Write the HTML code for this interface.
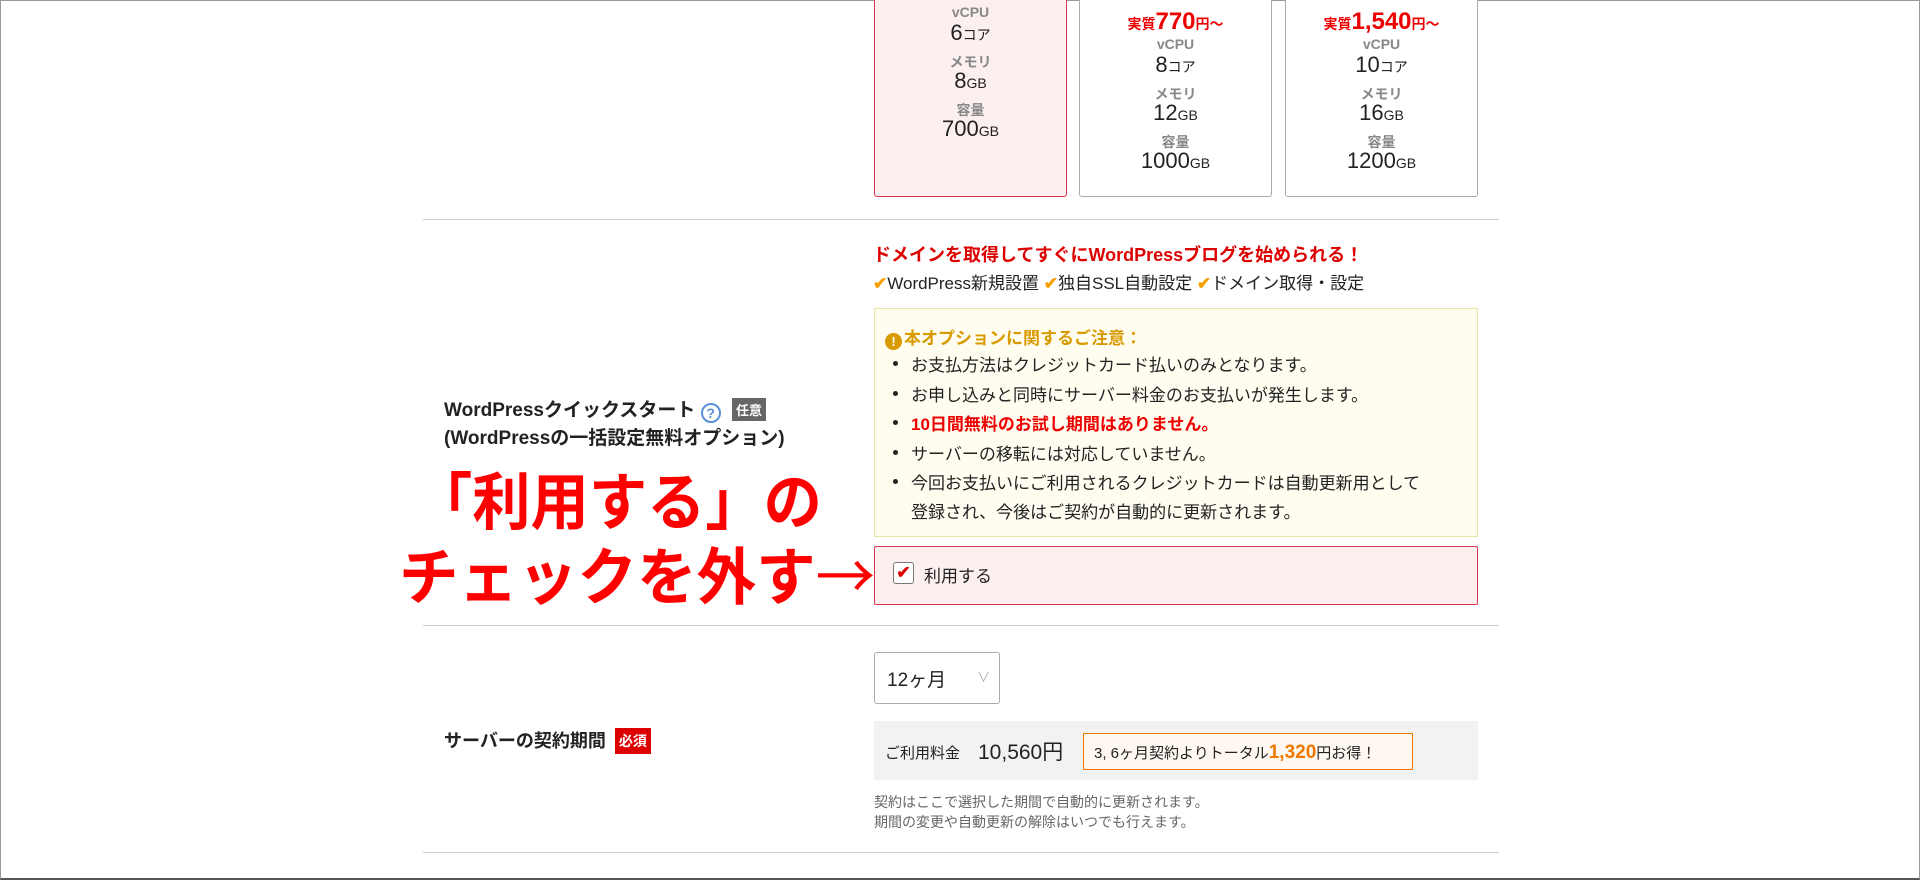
<!DOCTYPE html>
<html><head><meta charset="utf-8"><style>
*{margin:0;padding:0;box-sizing:border-box}
body{width:1920px;height:880px;background:#fff;position:relative;overflow:hidden;font-family:"Liberation Sans","Noto Sans CJK JP",sans-serif;color:#222;border:1px solid #999;border-bottom:2px solid #555}
.a{position:absolute;white-space:nowrap}
.card{position:absolute;top:-4px;height:200px;border:1px solid #aaa;border-radius:3px;background:#fff;text-align:center}
.card.sel{background:#fbefef;border-color:#e0334a}
.lb{font-size:14px;font-weight:bold;color:#888;position:absolute;left:0;right:0}
.vl{font-size:22px;color:#222;position:absolute;left:0;right:0}
.vl small{font-size:14px}
.pr{position:absolute;left:0;right:0;color:#e00;font-weight:bold;font-size:14px}
.pr b{font-size:24px}
.hr{position:absolute;left:422px;width:1076px;height:1px;background:#ccc}
.li{position:absolute;left:910px;font-size:17px;color:#222}
.li:before{content:"";position:absolute;left:-18px;top:10px;width:5px;height:5px;border-radius:50%;background:#222}
.chk{color:#f5a000;font-weight:bold}
.big{position:absolute;color:#f00;font-weight:bold;font-size:62px;white-space:nowrap;transform-origin:0 0}
</style></head><body>
<div class="card sel" style="left:873px;width:193px">
 <div class="lb" style="top:6px">vCPU</div><div class="vl" style="top:22px">6<small>コア</small></div>
 <div class="lb" style="top:54px">メモリ</div><div class="vl" style="top:70px">8<small>GB</small></div>
 <div class="lb" style="top:102px">容量</div><div class="vl" style="top:118px">700<small>GB</small></div>
</div>
<div class="card" style="left:1078px;width:193px">
 <div class="pr" style="top:10px">実質<b>770</b>円～</div>
 <div class="lb" style="top:38px">vCPU</div><div class="vl" style="top:54px">8<small>コア</small></div>
 <div class="lb" style="top:86px">メモリ</div><div class="vl" style="top:102px">12<small>GB</small></div>
 <div class="lb" style="top:134px">容量</div><div class="vl" style="top:150px">1000<small>GB</small></div>
</div>
<div class="card" style="left:1284px;width:193px">
 <div class="pr" style="top:10px">実質<b>1,540</b>円～</div>
 <div class="lb" style="top:38px">vCPU</div><div class="vl" style="top:54px">10<small>コア</small></div>
 <div class="lb" style="top:86px">メモリ</div><div class="vl" style="top:102px">16<small>GB</small></div>
 <div class="lb" style="top:134px">容量</div><div class="vl" style="top:150px">1200<small>GB</small></div>
</div>
<div class="hr" style="top:218px"></div>
<div class="a" style="left:872px;top:240px;font-size:18px;font-weight:bold;color:#d00">ドメインを取得してすぐにWordPressブログを始められる！</div>
<div class="a" style="left:872px;top:268px;font-size:17px"><span class="chk">✔</span>WordPress新規設置 <span class="chk">✔</span>独自SSL自動設定 <span class="chk">✔</span>ドメイン取得・設定</div>
<div class="a" style="left:873px;top:307px;width:604px;height:229px;background:#fffdf0;border:1px solid #ebe6a8"></div>
<div class="a" style="left:884px;top:323px;font-size:17px;font-weight:bold;color:#d99a00"><span style="display:inline-block;width:17px;height:17px;border-radius:50%;background:#d99a00;color:#fff;font-size:13px;text-align:center;line-height:17px;vertical-align:-2px;margin-right:2px">!</span>本オプションに関するご注意：</div>
<div class="li" style="top:350px">お支払方法はクレジットカード払いのみとなります。</div>
<div class="li" style="top:380px">お申し込みと同時にサーバー料金のお支払いが発生します。</div>
<div class="li" style="top:409px;color:#e00;font-weight:bold">10日間無料のお試し期間はありません。</div>
<div class="li" style="top:439px">サーバーの移転には対応していません。</div>
<div class="li" style="top:468px">今回お支払いにご利用されるクレジットカードは自動更新用として</div>
<div class="a" style="left:910px;top:497px;font-size:17px">登録され、今後はご契約が自動的に更新されます。</div>
<div class="a" style="left:873px;top:545px;width:604px;height:59px;background:#fbeff0;border:1px solid #e0334a;border-radius:2px"></div>
<div class="a" style="left:892px;top:561px;width:21px;height:22px;border:1px solid #777;border-radius:3px;background:#fff;color:#d00;font-size:17px;text-align:center;line-height:20px;font-weight:bold">✔</div>
<div class="a" style="left:923px;top:561px;font-size:17px">利用する</div>
<div class="a" style="left:443px;top:394px;font-size:19px;font-weight:bold">WordPressクイックスタート <span style="display:inline-block;width:20px;height:20px;border:2px solid #5b8fd6;border-radius:50%;color:#5b8fd6;font-size:14px;text-align:center;line-height:17px;vertical-align:-2px">?</span> <span style="display:inline-block;background:#666;color:#fff;font-size:13px;padding:2px 4px;margin-left:6px;vertical-align:1px">任意</span></div>
<div class="a" style="left:443px;top:422px;font-size:19px;font-weight:bold">(WordPressの一括設定無料オプション)</div>
<div class="big" style="left:413px;top:451px;transform:scaleX(0.94)">「利用する」の</div>
<div class="big" style="left:398px;top:526px;transform:scaleX(0.96)">チェックを外す<span style="font-weight:normal;font-family:'Noto Sans CJK JP',sans-serif">→</span></div>
<div class="hr" style="top:624px"></div>
<div class="a" style="left:873px;top:651px;width:126px;height:52px;border:1px solid #aaa;border-radius:3px;background:#fff"></div>
<div class="a" style="left:886px;top:664px;font-size:19px">12ヶ月</div>
<div class="a" style="left:976px;top:666px;font-size:13px;color:#aaa">∨</div>
<div class="a" style="left:443px;top:726px;font-size:18px;font-weight:bold">サーバーの契約期間 <span style="display:inline-block;background:#d00;color:#fff;font-size:14px;padding:3px 4px;vertical-align:1px;margin-left:4px">必須</span></div>
<div class="a" style="left:873px;top:720px;width:604px;height:59px;background:#f2f2f2"></div>
<div class="a" style="left:884px;top:741px;font-size:15px">ご利用料金</div>
<div class="a" style="left:977px;top:735px;font-size:21px">10,560円</div>
<div class="a" style="left:1082px;top:732px;width:330px;height:37px;background:#fff8f0;border:1px solid #f07800"></div>
<div class="a" style="left:1093px;top:741px;font-size:15px">3, 6ヶ月契約よりトータル<b style="color:#f07800;font-size:19px">1,320</b>円お得！</div>
<div class="a" style="left:873px;top:791px;font-size:14px;color:#666;line-height:20px">契約はここで選択した期間で自動的に更新されます。<br>期間の変更や自動更新の解除はいつでも行えます。</div>
<div class="hr" style="top:851px"></div>
</body></html>
